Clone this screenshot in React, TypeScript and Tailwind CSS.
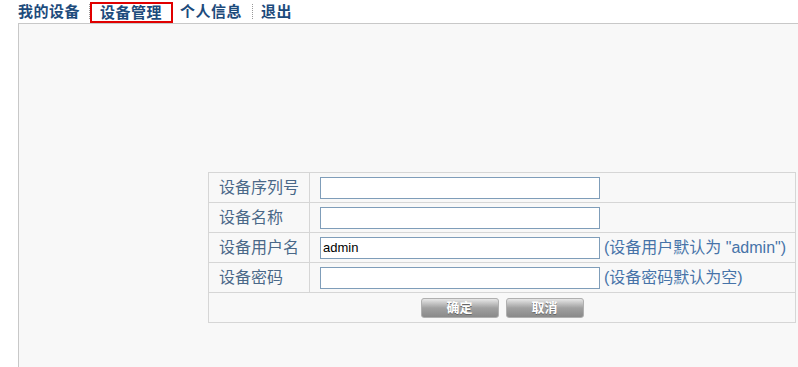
import React from "react";

const cjk = { fontFamily: '"Liberation Sans", "Noto Sans CJK SC", sans-serif' };

function Row({ label, value, hint }: { label: string; value?: string; hint?: string }) {
  return (
    <tr className="h-[30px]">
      <td className="w-[101px] border border-[#d6d6d6] pl-[10px] p-0 text-[16px] leading-[28px] text-[#4a6888] align-middle">
        {label}
      </td>
      <td className="border border-[#d6d6d6] pl-[10px] p-0 align-middle">
        <div className="flex items-center">
          <input
            readOnly
            value={value ?? ""}
            className="w-[280px] h-[22px] border border-[#7f9db9] bg-white px-[2px] text-[13px] text-black outline-none"
            style={{ fontFamily: '"Liberation Sans", sans-serif' }}
          />
          {hint && <span className="ml-[4px] text-[16px] leading-[22px] text-[#4673a8]">{hint}</span>}
        </div>
      </td>
    </tr>
  );
}

function Btn({ text }: { text: string }) {
  return (
    <button className="w-[78px] h-[20px] rounded-[3px] border border-[#b0b0b0] bg-gradient-to-b from-[#e8e8e8] via-[#a0a0a0] to-[#8a8a8a] text-[13px] font-bold leading-[18px] text-white [text-shadow:0_1px_0_#666]">
      {text}
    </button>
  );
}

export default function App() {
  return (
    <div className="w-[798px] h-[367px] bg-white flex flex-col overflow-hidden" style={cjk}>
      <div className="h-[23px] flex items-center pl-[18px] text-[15px] font-bold tracking-[0.5px] text-[#1d4b7c] shrink-0">
        <span className="leading-[20px]">我的设备</span>
        <span className="ml-[9px] h-[15px] border-l border-dotted border-[#999]" />
        <span className="h-[21px] border-2 border-[#e00000] pl-[8px] pr-[9px] leading-[17px] mt-[2px]">设备管理</span>
        <span className="ml-[7px] leading-[20px]">个人信息</span>
        <span className="ml-[10px] h-[15px] border-l border-dotted border-[#999]" />
        <span className="ml-[8px] leading-[20px]">退出</span>
      </div>
      <div className="ml-[18px] flex-1 border-l border-t border-[#c8c8c8] bg-[#f8f8f8] pt-[148px] pl-[189px]">
        <table className="w-[588px] border-collapse border border-[#d6d6d6]">
          <tbody>
            <Row label="设备序列号" />
            <Row label="设备名称" />
            <Row label="设备用户名" value="admin" hint={'(设备用户默认为 "admin")'} />
            <Row label="设备密码" hint="(设备密码默认为空)" />
            <tr className="h-[30px]">
              <td colSpan={2} className="border border-[#d6d6d6] p-0">
                <div className="flex justify-center gap-[7px]">
                  <Btn text="确定" />
                  <Btn text="取消" />
                </div>
              </td>
            </tr>
          </tbody>
        </table>
      </div>
    </div>
  );
}
